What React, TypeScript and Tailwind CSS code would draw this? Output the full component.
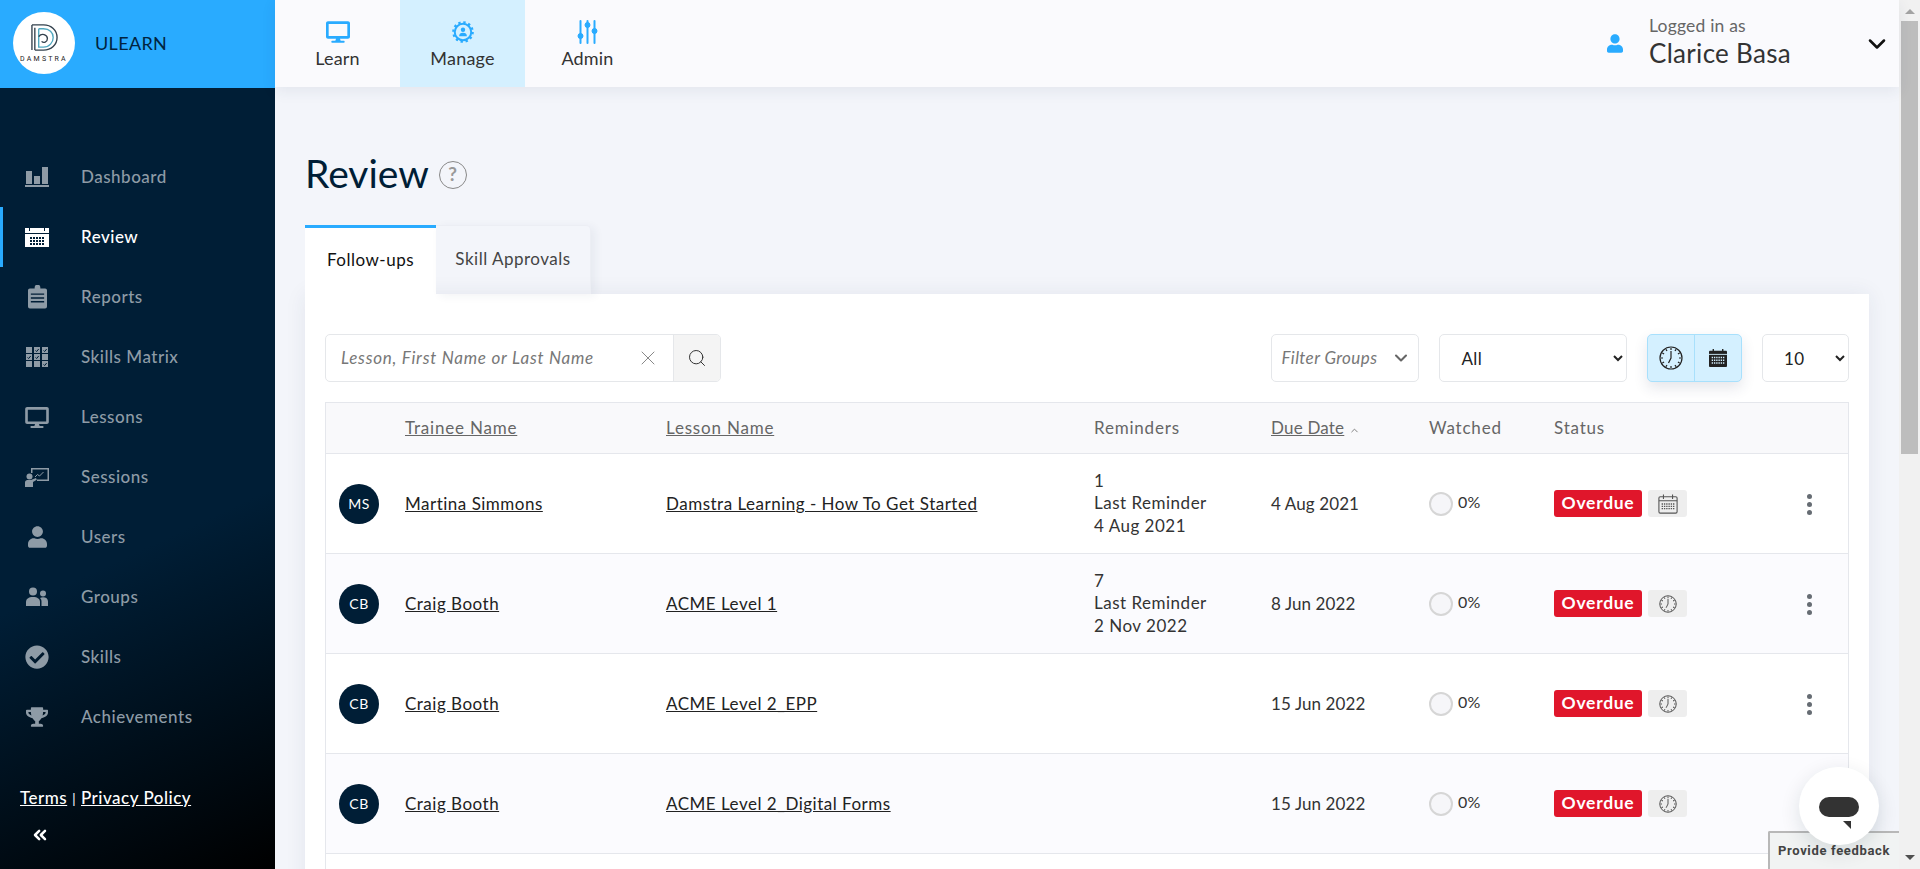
import { FaCheckCircle, FaDesktop, FaTrophy, FaUser } from 'react-icons/fa';
import { LuChevronDown, LuChevronUp, LuChevronsLeft, LuSearch, LuX } from 'react-icons/lu';

const Bars = ({ className = '' }: { className?: string }) => (
  <svg viewBox="0 0 24 20" className={className} fill="currentColor">
    <rect x="1" y="4" width="6" height="13" />
    <rect x="9" y="9" width="6" height="8" />
    <rect x="17" y="0" width="6" height="17" />
    <rect x="0" y="18" width="24" height="2" />
  </svg>
);

const Calendar = ({ className = '' }: { className?: string }) => {
  const dots = [];
  for (let r = 0; r < 3; r++) {
    for (let c = 0; c < 5; c++) {
      dots.push(<rect key={`${r}-${c}`} x={5 + c * 3} y={10 + r * 3} width="2" height="2" fill="#001e36" />);
    }
  }
  return (
    <svg viewBox="0 0 24 20" className={className} fill="currentColor">
      <rect x="0" y="1" width="24" height="19" />
      <rect x="4" y="0" width="1" height="4" fill="#001e36" />
      <rect x="19" y="0" width="1" height="4" fill="#001e36" />
      <rect x="0" y="6" width="24" height="1" fill="#001e36" />
      {dots}
    </svg>
  );
};

const Clipboard = ({ className = '' }: { className?: string }) => (
  <svg viewBox="0 0 20 24" className={className} fill="currentColor">
    <path d="M7 3V2a3 3 0 0 1 6 0v1h5a2 2 0 0 1 2 2v17a2 2 0 0 1-2 2H2a2 2 0 0 1-2-2V5a2 2 0 0 1 2-2z" />
    <path d="M3 9h14M3 13h14M3 17h14" stroke="#001e36" strokeWidth="1.5" />
  </svg>
);

const Matrix = ({ className = '' }: { className?: string }) => {
  const cells = [0, 1, 1, 1, 1, 0, 0, 0, 1];
  return (
    <svg viewBox="0 0 22 20" className={className}>
      {cells.map((on, i) => {
        const x = (i % 3) * 8;
        const y = Math.floor(i / 3) * 7;
        return (
          <g key={i}>
            <rect x={x} y={y} width="6" height="6" fill="currentColor" />
            {on ? <path d={`M${x + 1.5} ${y + 3.5}l1.2 1 2-2.5`} stroke="#001e36" fill="none" /> : null}
          </g>
        );
      })}
    </svg>
  );
};

const Teacher = ({ className = '' }: { className?: string }) => (
  <svg viewBox="0 0 24 20" className={className} fill="currentColor">
    <path d="M6 1h18v13H12v-1.500h10.500V2.500H7.500V6H6z" />
    <path d="M10 10l2.500-2.500 2 1.500 4-4" fill="none" stroke="currentColor" strokeWidth="1" />
    <circle cx="4.500" cy="9.500" r="3" />
    <path d="M0 20v-4.500C0 13.500 1.500 13 3.500 13H6l5-2 .8 1.800L8 15v5z" />
  </svg>
);

const Group = ({ className = '' }: { className?: string }) => (
  <svg viewBox="0 0 22 20" className={className} fill="currentColor">
    <circle cx="7" cy="4.500" r="4" />
    <path d="M0 19v-4c0-3 2.500-5 7-5s7 2 7 5v4z" />
    <circle cx="17" cy="6.500" r="3" />
    <path d="M15.500 19v-4.500c0-1.500-.5-2.500-1.500-3.500 1-.5 2-.8 3-.8 3 0 5 1.500 5 4.300V19z" />
  </svg>
);

const Gear = ({ className = '' }: { className?: string }) => (
  <svg viewBox="0 0 24 24" className={className} fill="none" stroke="currentColor">
    <circle cx="12" cy="12" r="9" strokeWidth="2.2" />
    <circle cx="12" cy="12" r="10.6" strokeWidth="2.4" strokeDasharray="2.6 2.95" />
    <circle cx="12" cy="9.500" r="2.400" fill="currentColor" stroke="none" />
    <path d="M7.800 16.500c0-2.600 1.600-3.600 4.200-3.600s4.200 1 4.200 3.600z" fill="currentColor" stroke="none" />
  </svg>
);

const Sliders = ({ className = '' }: { className?: string }) => (
  <svg viewBox="0 0 20 24" className={className} fill="currentColor" stroke="currentColor">
    <path d="M3 1v22M10 1v22M17 1v22" strokeWidth="2" strokeLinecap="round" />
    <circle cx="3" cy="16" r="2.500" />
    <circle cx="10" cy="5" r="2.500" />
    <circle cx="17" cy="11" r="2.500" />
  </svg>
);

const Clock = ({ className = '' }: { className?: string }) => {
  const ticks = [0, 30, 60, 90, 120, 150, 180, 210, 240, 270, 300, 330];
  return (
    <svg viewBox="0 0 24 24" className={className} fill="none" stroke="currentColor" strokeWidth="1.2">
      <circle cx="12" cy="12" r="11" />
      {ticks.map((t) => (
        <path key={t} d="M12 2v2" transform={`rotate(${t} 12 12)`} />
      ))}
      <path d="M12 5v7l-2.500 5" />
    </svg>
  );
};

const OutlineCalendar = ({ className = '' }: { className?: string }) => (
  <svg viewBox="0 0 22 22" className={className} fill="none" stroke="currentColor">
    <rect x="1" y="3" width="20" height="18" rx="1.500" strokeWidth="1.200" />
    <path d="M1 7.500h20M6 0.500v5M16 0.500v5" strokeWidth="1.200" />
    <path d="M4 11h14M4 13.500h14M4 16h14" strokeWidth="1.400" strokeDasharray="1.500 1" />
  </svg>
);

const SolidCalendar = ({ className = '' }: { className?: string }) => (
  <svg viewBox="0 0 22 20" className={className} fill="currentColor">
    <rect x="1" y="2" width="20" height="18" rx="1" />
    <rect x="5" y="0" width="1.500" height="4" />
    <rect x="15.500" y="0" width="1.500" height="4" />
    <path d="M1 6h20" stroke="#d4f0ff" strokeWidth="1" />
    <path d="M4 9.500h14M4 12.500h14M4 15.500h14" stroke="#d4f0ff" strokeWidth="1.600" strokeDasharray="1.500 1" />
  </svg>
);

const Logo = () => (
  <div className="flex h-[62px] w-[62px] shrink-0 flex-col items-center rounded-full bg-white pt-[11px]">
    <svg viewBox="0 0 30 30" className="h-[29px] w-[29px]" fill="none" stroke="#33414d" strokeWidth="1.400">
      <path d="M2 2h12c8 0 14 5.500 14 13s-6 13-14 13H5" />
      <path d="M2 2v26M5 5v23" />
      <path d="M9 6h5c6 0 10 4 10 9s-4 10-10 10h-5v-19" stroke="#4fa7bf" />
      <path d="M9 14c3-4 9-2 9 2s-4 5-6 3" />
    </svg>
    <span className="mt-[3px] font-['Roboto'] text-[7px] leading-[8px] tracking-[2.200px] text-[#222]">DAMSTRA</span>
  </div>
);

const navItems = [
  { label: 'Dashboard', icon: <Bars className="h-[20px] w-[24px]" /> },
  { label: 'Review', icon: <Calendar className="h-[20px] w-[24px]" />, active: true },
  { label: 'Reports', icon: <Clipboard className="h-[24px] w-[19px]" /> },
  { label: 'Skills Matrix', icon: <Matrix className="h-[20px] w-[22px]" /> },
  { label: 'Lessons', icon: <FaDesktop className="h-[21px] w-[24px]" /> },
  { label: 'Sessions', icon: <Teacher className="h-[20px] w-[24px]" /> },
  { label: 'Users', icon: <FaUser className="h-[22px] w-[19px]" /> },
  { label: 'Groups', icon: <Group className="h-[20px] w-[22px]" /> },
  { label: 'Skills', icon: <FaCheckCircle className="h-[24px] w-[24px]" /> },
  { label: 'Achievements', icon: <FaTrophy className="h-[20px] w-[22px]" /> },
];

const topTabs = [
  { label: 'Learn', icon: <FaDesktop className="h-[22px] w-[24px]" /> },
  { label: 'Manage', icon: <Gear className="h-[22px] w-[22px]" />, active: true },
  { label: 'Admin', icon: <Sliders className="h-[24px] w-[21px]" /> },
];

type Row = {
  initials: string;
  name: string;
  lesson: string;
  reminders?: [string, string];
  due: string;
  kind: 'calendar' | 'clock';
};

const rows: Row[] = [
  { initials: 'MS', name: 'Martina Simmons', lesson: 'Damstra Learning - How To Get Started', reminders: ['1', '4 Aug 2021'], due: '4 Aug 2021', kind: 'calendar' },
  { initials: 'CB', name: 'Craig Booth', lesson: 'ACME Level 1', reminders: ['7', '2 Nov 2022'], due: '8 Jun 2022', kind: 'clock' },
  { initials: 'CB', name: 'Craig Booth', lesson: 'ACME Level 2_EPP', due: '15 Jun 2022', kind: 'clock' },
  { initials: 'CB', name: 'Craig Booth', lesson: 'ACME Level 2_Digital Forms', due: '15 Jun 2022', kind: 'clock' },
];

const gridCols = 'grid grid-cols-[79px_261px_428px_177px_158px_125px_1fr]';

const Kebab = () => (
  <div className="flex flex-col gap-[3px]">
    <span className="h-[5px] w-[5px] rounded-full bg-[#666c73]" />
    <span className="h-[5px] w-[5px] rounded-full bg-[#666c73]" />
    <span className="h-[5px] w-[5px] rounded-full bg-[#666c73]" />
  </div>
);

export default function App() {
  return (
    <div className="relative flex h-screen overflow-hidden bg-[#f3f5fa] font-['Lato',sans-serif] text-[17px] tracking-[0.5px] text-[#333]">
      {/* sidebar */}
      <aside className="flex w-[275px] shrink-0 flex-col">
        <div className="flex h-[88px] items-center gap-[20px] bg-[#29abff] pb-[2px] pl-[13px]">
          <Logo />
          <span className="text-[18px] tracking-[0.35px] text-[#012440]">ULEARN</span>
        </div>
        <div className="flex flex-1 flex-col bg-[linear-gradient(155deg,#001e36_0%,#001e36_58%,#000000_100%)] pt-[59px]">
          {navItems.map((item) => (
            <div
              key={item.label}
              className={`flex h-[60px] items-center border-l-[3px] pl-[22px] font-medium ${
                item.active ? 'border-[#29abff] text-white' : 'border-transparent text-[#8e9ba6]'
              }`}
            >
              <span className="flex w-[24px] justify-center">{item.icon}</span>
              <span className="ml-[32px]">{item.label}</span>
            </div>
          ))}
          <div className="mt-[38px] pl-[20px] font-medium text-white">
            <span className="underline">Terms</span>
            <span className="mx-[5px] text-[13px]">|</span>
            <span className="underline">Privacy Policy</span>
          </div>
          <LuChevronsLeft className="ml-[30px] mt-[14px] h-[20px] w-[20px] text-white" strokeWidth={3} />
        </div>
      </aside>

      <div className="flex min-w-0 flex-1 flex-col">
        {/* top bar */}
        <header className="z-10 flex h-[87px] shrink-0 bg-[#fafafd] shadow-[0_4px_14px_rgba(40,50,90,0.08)]">
          {topTabs.map((t) => (
            <div
              key={t.label}
              className={`flex w-[125px] flex-col items-center pt-[20px] text-[18px] tracking-[0.2px] ${t.active ? 'bg-[#d4f0ff]' : ''}`}
            >
              <span className="flex h-[24px] items-center text-[#29abff]">{t.icon}</span>
              <span className="mt-[2px] leading-[24px]">{t.label}</span>
            </div>
          ))}
          <div className="ml-auto flex w-[312px] items-center pb-[4px] pl-[20px]">
            <FaUser className="mt-[4px] h-[21px] w-[16px] text-[#29abff]" />
            <div className="ml-[26px] flex flex-col">
              <span className="text-[17.500px] leading-[22px] tracking-[0.2px] text-[#666]">Logged in as</span>
              <span className="text-[26px] leading-[32px] tracking-[0.3px] text-[#333]">Clarice Basa</span>
            </div>
            <LuChevronDown className="ml-auto mr-[8px] mt-[4px] h-[28px] w-[28px] text-[#111]" strokeWidth={2.2} />
          </div>
        </header>

        <main className="flex-1 overflow-hidden pl-[30px] pr-[30px] pt-[63px]">
          <div className="flex h-[45px] items-center">
            <h1 className="text-[39px] leading-[44px] tracking-[0px] text-[#001e36]">Review</h1>
            <span className="ml-[10px] mt-[4px] flex h-[28px] w-[28px] items-center justify-center rounded-full border border-[#888] text-[19px] font-bold text-[#999]">
              ?
            </span>
          </div>

          <div className="mt-[30px] flex h-[69px]">
            <div className="w-[131px] border-t-[3px] border-[#29abff] bg-white pt-[19px] text-center text-[#111]">
              Follow-ups
            </div>
            <div className="w-[155px] rounded-tr-[5px] border-t border-r border-[#eceef4] pt-[20px] text-center text-[#444] shadow-[4px_2px_10px_rgba(40,50,90,0.06)]">
              Skill Approvals
            </div>
          </div>

          <section className="bg-white p-[20px] pt-[40px] shadow-[0_0_20px_rgba(40,50,90,0.08)]">
            {/* filters */}
            <div className="flex h-[48px] items-stretch">
              <div className="flex w-[396px] overflow-hidden rounded-[5px] border border-[#e5e7ea]">
                <span className="flex-1 whitespace-nowrap pl-[15px] pt-[10px] tracking-[0.75px] text-[#777] italic">Lesson, First Name or Last Name</span>
                <span className="flex w-[49px] items-center justify-center">
                  <LuX className="h-[24px] w-[24px] text-[#888]" strokeWidth={1} />
                </span>
                <span className="flex w-[47px] items-center justify-center border-l border-[#e5e7ea] bg-[#f4f4f4]">
                  <LuSearch className="h-[20px] w-[20px] text-[#333]" strokeWidth={1.2} />
                </span>
              </div>
              <div className="ml-[550px] flex w-[149px] items-center whitespace-nowrap rounded-[5px] border border-[#e5e7ea] pl-[10px] tracking-[0.4px] text-[#777] italic">
                Filter Groups
                <LuChevronDown className="ml-auto mr-[7px] h-[20px] w-[20px] text-[#666]" strokeWidth={2.5} />
              </div>
              <select defaultValue="All" className="ml-[20px] w-[188px] rounded-[5px] border border-[#e5e7ea] bg-white pl-[17px] pr-[6px] text-[#222]">
                <option>All</option>
              </select>
              <div className="ml-[20px] flex w-[95px] rounded-[5px] border border-[#a8e0fc] bg-[#d4f0ff] shadow-[0_6px_14px_rgba(40,50,90,0.12)]">
                <span className="flex flex-1 items-center justify-center border-r border-[#a8e0fc]">
                  <Clock className="h-[24px] w-[24px] text-[#222]" />
                </span>
                <span className="flex flex-1 items-center justify-center">
                  <SolidCalendar className="h-[18px] w-[20px] text-[#222]" />
                </span>
              </div>
              <select defaultValue="10" className="ml-[20px] w-[87px] rounded-[5px] border border-[#e5e7ea] bg-white pl-[17px] pr-[6px] tracking-[0.2px] text-[#222]">
                <option>10</option>
              </select>
            </div>

            {/* table */}
            <div className="mt-[20px] border border-[#e5e7ec]">
              <div className={`${gridCols} h-[51px] items-center border-b border-[#e5e7ec] bg-[#f9f9fb] tracking-[0.8px] text-[#666]`}>
                <span />
                <span className="underline">Trainee Name</span>
                <span className="underline">Lesson Name</span>
                <span>Reminders</span>
                <span className="flex items-center gap-[5px] tracking-[0.2px]">
                  <span className="underline">Due Date</span>
                  <LuChevronUp className="mt-[4px] h-[11px] w-[11px] text-[#777]" strokeWidth={2} />
                </span>
                <span>Watched</span>
                <span>Status</span>
              </div>
              {rows.map((row, i) => (
                <div
                  key={i}
                  className={`${gridCols} h-[100px] items-center border-b border-[#e5e7ec] ${i % 2 ? 'bg-[#fbfbfe]' : 'bg-white'}`}
                >
                  <span className="ml-[13px] flex h-[40px] w-[40px] items-center justify-center rounded-full bg-[#001e36] text-[14px] text-white">
                    {row.initials}
                  </span>
                  <span className="text-[#222] underline">{row.name}</span>
                  <span className="text-[#222] underline">{row.lesson}</span>
                  <div className="leading-[22.500px]">
                    {row.reminders ? (
                      <>
                        <div>{row.reminders[0]}</div>
                        <div>Last Reminder</div>
                        <div>{row.reminders[1]}</div>
                      </>
                    ) : null}
                  </div>
                  <span className="tracking-[0.1px]">{row.due}</span>
                  <span className="flex items-center gap-[5px]">
                    <span className="h-[24px] w-[24px] rounded-full border-2 border-[#d6d6d6] bg-[#f6f6f9]" />
                    <span className="-mt-[3px] text-[16px] tracking-[0.2px]">0%</span>
                  </span>
                  <div className="flex items-center">
                    <span className="flex h-[27px] w-[88px] items-center justify-center rounded-[3px] bg-[#e0162b] text-[17.500px] font-bold tracking-[0.7px] text-white">
                      Overdue
                    </span>
                    <span className="ml-[6px] flex h-[27px] w-[39px] items-center justify-center rounded-[3px] bg-[#eeeeee]">
                      {row.kind === 'calendar' ? (
                        <OutlineCalendar className="h-[20px] w-[20px] text-[#555]" />
                      ) : (
                        <Clock className="h-[18px] w-[18px] text-[#444]" />
                      )}
                    </span>
                    <span className="ml-[120px] mt-[2px]">
                      <Kebab />
                    </span>
                  </div>
                </div>
              ))}
              <div className="h-[60px] bg-white" />
            </div>
          </section>
        </main>
      </div>

      {/* scrollbar */}
      <div className="flex w-[21px] shrink-0 flex-col items-center bg-[#f1f1f1]">
        <span className="mt-[9px] h-0 w-0 border-x-[5px] border-b-[5px] border-x-transparent border-b-[#a3a3a3]" />
        <span className="mt-[7px] h-[433px] w-[17px] bg-[#bdbdbd]" />
        <span className="mb-[9px] mt-auto h-0 w-0 border-x-[5px] border-t-[5px] border-x-transparent border-t-[#505050]" />
      </div>

      {/* feedback + chat overlay */}
      <div className="absolute bottom-0 right-[21px] flex h-[38px] w-[131px] rounded-tl-[2px] border-l-2 border-t-2 border-[#b8b8b8] bg-[#f1f3f3] pl-[8px] pt-[10px] font-['Roboto'] text-[13px] font-bold leading-[16px] tracking-[0.65px] whitespace-nowrap text-[#444]">
        Provide feedback
      </div>
      <div className="absolute bottom-[24px] right-[41px] flex h-[78px] w-[80px] items-center justify-center rounded-full bg-white pt-[1px] shadow-[0_6px_20px_rgba(0,40,50,0.12)]">
        <div className="relative h-[20px] w-[40px] rounded-full bg-[#333]">
          <span className="absolute right-[8px] top-[24px] h-0 w-0 border-l-[8px] border-t-[8px] border-l-transparent border-t-[#333]" />
        </div>
      </div>
    </div>
  );
}
